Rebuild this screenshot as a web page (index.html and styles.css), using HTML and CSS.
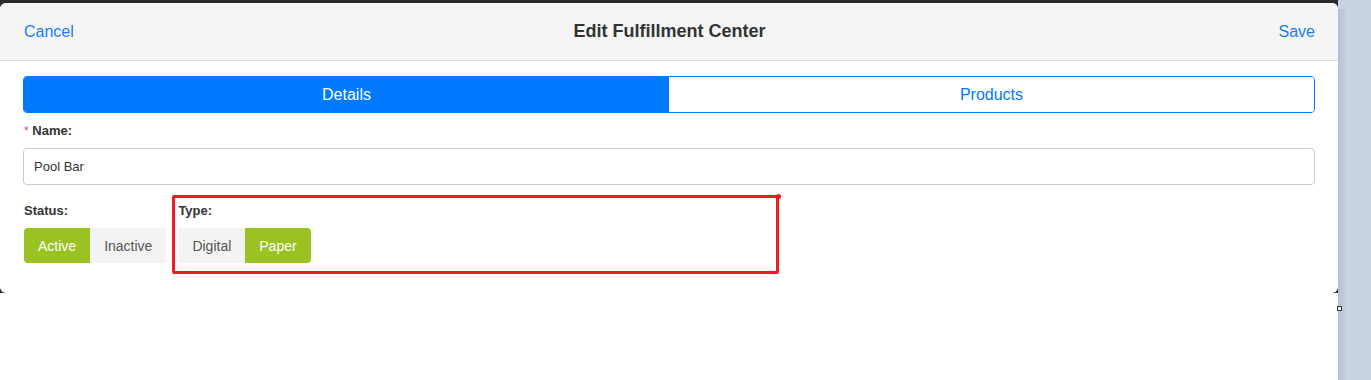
FILE: index.html
```html
<!DOCTYPE html>
<html lang="en">
<head>
    <meta charset="UTF-8">
    <meta name="viewport" content="width=device-width, initial-scale=1.0">
    <title>Edit Fulfillment Center</title>
    <link rel="stylesheet" href="styles.css">
</head>
<body>

<div class="page">
    <div class="main">
        <!-- Dark backdrop behind the modal -->
        <div class="backdrop">
            <div class="modal">
                <!-- Header -->
                <div class="modal-header">
                    <a class="header-link">Cancel</a>
                    <div class="modal-title">Edit Fulfillment Center</div>
                    <a class="header-link right">Save</a>
                </div>

                <div class="modal-body">
                    <!-- Tabs -->
                    <div class="tabs">
                        <div class="tab active">Details</div>
                        <div class="tab">Products</div>
                    </div>

                    <!-- Name field -->
                    <label class="field-label"><span class="required">*</span> Name:</label>
                    <input class="text-input" type="text" value="Pool Bar">

                    <!-- Toggles -->
                    <div class="toggle-row">
                        <div class="toggle-group">
                            <div class="field-label">Status:</div>
                            <div class="segmented">
                                <div class="seg on">Active</div>
                                <div class="seg">Inactive</div>
                            </div>
                        </div>
                        <div class="toggle-group">
                            <div class="field-label">Type:</div>
                            <div class="segmented">
                                <div class="seg">Digital</div>
                                <div class="seg on">Paper</div>
                            </div>
                        </div>
                    </div>
                </div>
            </div>
        </div>
        <div class="corner-handle"></div>
    </div>

    <div class="side">
        <div class="side-edge"></div>
    </div>
</div>

<!-- Annotation drawn over the screenshot -->
<div class="annotation"><span class="annotation-dot"></span></div>

</body>
</html>
```

FILE: styles.css
```css
/* Global Styling */
body {
    font-family: 'Liberation Sans', Arial, sans-serif;
    margin: 0;
    background-color: #fff;
    color: #333;
}

.page {
    display: flex;
    height: 380px;
}

.main {
    width: 1338px;
    position: relative;
}

/* Backdrop + Modal */
.backdrop {
    background-color: #2b2b2b;
    padding-top: 3px;
}

.modal {
    background-color: #fff;
    border-radius: 6px;
    height: 290px;
    overflow: hidden;
}

.modal-header {
    display: grid;
    grid-template-columns: 1fr auto 1fr;
    align-items: center;
    height: 57px;
    padding: 0 23px 0 24px;
    background-color: #f5f5f5;
    border-bottom: 1px solid #dcdcdc;
}

.header-link {
    color: #1a7df5;
    font-size: 16px;
    cursor: pointer;
}

.header-link.right {
    justify-self: end;
}

.modal-title {
    font-size: 18px;
    font-weight: bold;
    color: #333;
}

.modal-body {
    padding: 15px 23px 0 23px;
}

/* Tabs */
.tabs {
    display: flex;
    height: 37px;
    border: 1px solid #007aff;
    border-radius: 4px;
    overflow: hidden;
    box-sizing: border-box;
}

.tab {
    flex: 1;
    display: flex;
    justify-content: center;
    align-items: center;
    font-size: 16px;
    color: #007aff;
    background-color: #fff;
}

.tab.active {
    background-color: #007aff;
    color: #fff;
}

/* Fields */
.field-label {
    display: block;
    font-size: 13px;
    font-weight: bold;
    color: #333;
    line-height: 20px;
    margin: 8px 0 7px 1px;
}

.required {
    color: #d9534f;
    font-weight: normal;
    font-size: 12px;
}

.text-input {
    display: block;
    width: 100%;
    height: 37px;
    box-sizing: border-box;
    border: 1px solid #ccc;
    border-radius: 4px;
    padding: 0 10px;
    font-family: 'Liberation Sans', Arial, sans-serif;
    font-size: 13px;
    color: #333;
}

.toggle-row {
    display: flex;
    gap: 12px;
    margin-top: 8px;
    padding-left: 1px;
}

.toggle-group .field-label {
    margin-left: 0;
}

.segmented {
    display: flex;
    height: 35px;
    border-radius: 4px;
    overflow: hidden;
    background-color: #f3f3f3;
}

.seg {
    display: flex;
    align-items: center;
    padding: 0 14px;
    font-size: 14px;
    color: #555;
}

.seg.on {
    background-color: #9bc223;
    color: #fff;
}

/* Little resize handle under the modal */
.corner-handle {
    position: absolute;
    left: 1337px;
    top: 306px;
    width: 3px;
    height: 3px;
    border: 1px solid #333;
    background-color: #fff;
    z-index: 2;
}

/* Right side panel */
.side {
    flex: 1;
    background-color: #c9d2e1;
    display: flex;
}

.side-edge {
    width: 8px;
    margin-top: 9px;
    background: linear-gradient(to right, #b4bfd1, #c6cfdf);
}

/* Red annotation box */
.annotation {
    position: absolute;
    left: 172px;
    top: 195px;
    width: 601px;
    height: 73px;
    border: 3px solid #ec1c24;
    border-radius: 2px;
}

.annotation-dot {
    position: absolute;
    right: -5px;
    top: -4px;
    width: 5px;
    height: 5px;
    border-radius: 50%;
    background-color: #ec1c24;
}
```
